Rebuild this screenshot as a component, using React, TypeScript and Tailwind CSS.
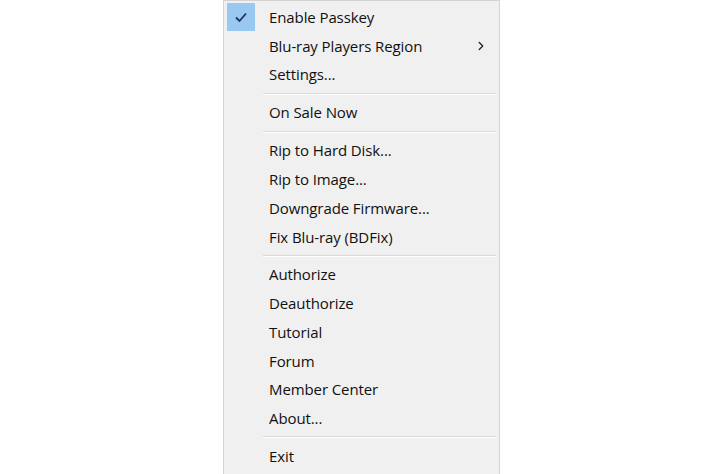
import { ChevronRight } from 'lucide-react'

type Entry = { label: string; checked?: boolean; submenu?: boolean } | 'sep'

const entries: Entry[] = [
  { label: 'Enable Passkey', checked: true },
  { label: 'Blu-ray Players Region', submenu: true },
  { label: 'Settings...' },
  'sep',
  { label: 'On Sale Now' },
  'sep',
  { label: 'Rip to Hard Disk...' },
  { label: 'Rip to Image...' },
  { label: 'Downgrade Firmware...' },
  { label: 'Fix Blu-ray (BDFix)' },
  'sep',
  { label: 'Authorize' },
  { label: 'Deauthorize' },
  { label: 'Tutorial' },
  { label: 'Forum' },
  { label: 'Member Center' },
  { label: 'About...' },
  'sep',
  { label: 'Exit' },
]

export default function App() {
  return (
    <div className="w-[722px] h-[474px] overflow-hidden bg-white pl-[223px] font-['Open_Sans',sans-serif]">
      <div className="w-[277px] h-[474px] border-x border-t border-[#d4d4d4] bg-[#f0f0f0] pt-[2px] px-[3px]">
        {entries.map((e, i) =>
          e === 'sep' ? (
            <div key={i} className="h-[9.3px] flex items-center pl-[36px]">
              <div className="h-[2px] w-full border-t border-[#d9d9d9] border-b border-b-white" />
            </div>
          ) : (
            <div key={i} className="h-[28.7px] flex items-center text-[15px] text-[#111]">
              <div className="w-[28px] h-[28px] flex items-center justify-center">
                {e.checked && (
                  <div className="w-[28px] h-[28px] bg-[#99c8f0] flex items-center justify-center">
                    <svg width="14" height="12" viewBox="0 0 14 12">
                      <path d="M2 6.5 L5.5 10 L12 2.5" fill="none" stroke="#1f3553" strokeWidth="1.8" />
                    </svg>
                  </div>
                )}
              </div>
              <span className="ml-[14px] flex-1 tracking-[-0.1px]">{e.label}</span>
              {e.submenu && <ChevronRight className="w-[14px] h-[14px] mr-[8px] text-[#222]" strokeWidth={2.2} />}
            </div>
          )
        )}
      </div>
    </div>
  )
}
